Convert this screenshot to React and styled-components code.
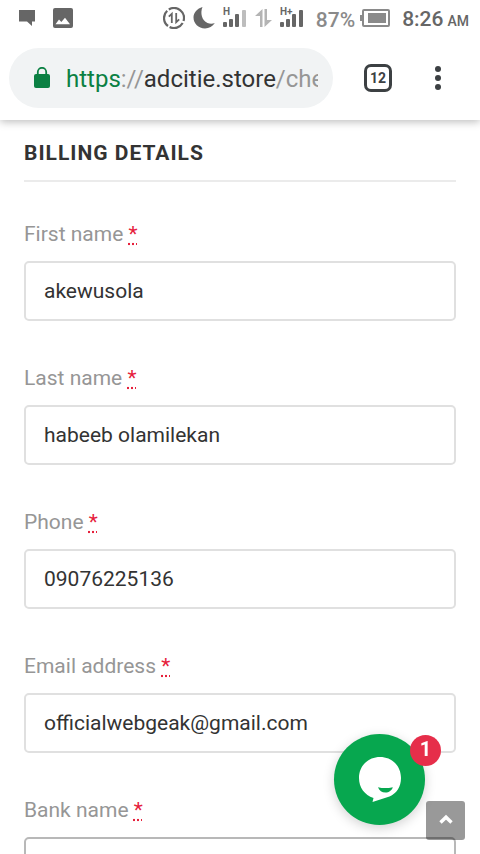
import React, { useState } from 'react';
import styled, { createGlobalStyle, ThemeProvider } from 'styled-components';

const theme = {
  text: '#333333',
  muted: '#969696',
  status: '#666666',
  secure: '#0b8043',
  danger: '#e6213c',
  badge: '#e62e4a',
  chat: '#07a74f',
};

const GlobalStyle = createGlobalStyle`
  * {
    box-sizing: border-box;
  }

  body {
    margin: 0;
    background: #ffffff;
    font-family: Roboto, "Liberation Sans", sans-serif;
  }

  button {
    border: 0;
    padding: 0;
    font-family: inherit;
    cursor: pointer;
  }

  svg {
    display: block;
    flex: none;
  }
`;

const Screen = styled.div`
  display: flex;
  flex-direction: column;
  height: 100vh;
  overflow: hidden;
`;

const Header = styled.header`
  position: relative;
  z-index: 1;
  flex: none;
  background: #ffffff;
  box-shadow: 0 2px 8px rgba(0, 0, 0, 0.26);
`;

const StatusBar = styled.div`
  display: flex;
  align-items: center;
  justify-content: space-between;
  height: 36px;
  padding: 0 11px 0 19px;
  color: ${({ theme: t }) => t.status};
`;

const StatusGroup = styled.div`
  display: flex;
  align-items: center;
  gap: ${({ $gap }) => $gap}px;
`;

const StatusText = styled.span`
  padding-top: 3px;
  font-size: 21px;
  font-weight: 500;
  line-height: 32px;
`;

const Charge = styled.div`
  display: flex;
  align-items: center;
  gap: 5px;
  padding: 0 4px;
  color: #8a8a8a;
`;

const Meridiem = styled.span`
  margin-left: 4px;
  font-size: 14px;
`;

const Toolbar = styled.div`
  display: flex;
  align-items: center;
  padding: 12px 24px 12px 9px;
`;

const AddressBar = styled.button`
  display: flex;
  flex: 1;
  align-items: center;
  gap: 16px;
  min-width: 0;
  height: 60px;
  padding: 0 15px 0 25px;
  border-radius: 30px;
  background: #f1f3f4;
  color: ${({ theme: t }) => t.secure};
`;

const Url = styled.span`
  flex: 1;
  overflow: hidden;
  padding-top: 2px;
  color: ${({ theme: t }) => t.muted};
  font-size: 24px;
  line-height: 32px;
  text-align: left;
  white-space: nowrap;
`;

const Scheme = styled.span`
  color: ${({ theme: t }) => t.secure};
`;

const Host = styled.span`
  color: ${({ theme: t }) => t.text};
`;

const TabsButton = styled.button`
  width: 28px;
  height: 28px;
  margin: 0 28px 0 31px;
  border: 3px solid #3c4043;
  border-radius: 7px;
  background: none;
  color: #3c4043;
  font-size: 14px;
  font-weight: 700;
  line-height: 22px;
`;

const MenuButton = styled.button`
  display: flex;
  align-items: center;
  justify-content: center;
  width: 36px;
  height: 36px;
  background: none;
  color: #3c4043;
`;

const Content = styled.main`
  flex: 1;
  min-height: 0;
  overflow-y: auto;
  padding: 18px 24px;
  scrollbar-width: none;
`;

const Title = styled.h3`
  margin: 0 0 34px;
  padding-bottom: 12px;
  border-bottom: 2px solid #ebebeb;
  color: ${({ theme: t }) => t.text};
  font-size: 21px;
  font-weight: 700;
  letter-spacing: 1px;
  line-height: 30px;
  text-transform: uppercase;
`;

const Field = styled.div`
  display: flex;
  flex-direction: column;
  gap: 9px;
  margin-bottom: 39px;
`;

const Label = styled.label`
  color: ${({ theme: t }) => t.muted};
  font-size: 21px;
  line-height: 36px;
`;

const Required = styled.abbr`
  color: ${({ theme: t }) => t.danger};
  text-decoration: underline dotted;
`;

const Input = styled.input`
  width: 100%;
  height: 60px;
  padding: 0 18px;
  border: 2px solid ${({ $active }) => ($active ? '#b8b8b8' : '#e0e0e0')};
  border-radius: 5px;
  outline: 0;
  background: #ffffff;
  color: ${({ theme: t }) => t.text};
  font-family: inherit;
  font-size: 21px;
`;

const ChatButton = styled.button`
  position: fixed;
  right: 55px;
  bottom: 29px;
  z-index: 2;
  display: flex;
  align-items: center;
  justify-content: center;
  width: 91px;
  height: 91px;
  border-radius: 50%;
  background: ${({ theme: t }) => t.chat};
  box-shadow: 0 3px 12px rgba(0, 0, 0, 0.18);
`;

const Badge = styled.span`
  position: absolute;
  top: 1px;
  right: -16px;
  width: 31px;
  height: 31px;
  border-radius: 50%;
  background: ${({ theme: t }) => t.badge};
  color: #ffffff;
  font-size: 20px;
  font-weight: 700;
  line-height: 28px;
`;

const TopButton = styled.button`
  position: fixed;
  right: 15px;
  bottom: 14px;
  z-index: 2;
  display: flex;
  align-items: center;
  justify-content: center;
  width: 39px;
  height: 39px;
  border-radius: 3px;
  background: rgba(0, 0, 0, 0.4);
`;

const MessageIcon = () => (
  <svg width="16" height="16" viewBox="0 0 16 16" fill="currentColor">
    <path d="M0 0h16v11.500h-3V16l-5-4.500H0z" />
  </svg>
);

const ImageIcon = () => (
  <svg width="20" height="20" viewBox="0 0 20 20">
    <rect width="20" height="20" rx="2" fill="currentColor" />
    <path d="M2.500 16.300l3.500-4.800 2.300 2.600 3.700-4.400 5 6.600z" fill="#fff" />
  </svg>
);

const DataIcon = () => (
  <svg width="22" height="22" viewBox="0 0 22 22" fill="none" stroke="currentColor">
    <path
      d="M5.800 2.500A10 10 0 0 1 20.500 14M19.700 16A10 10 0 0 1 6.600 20M5 19A10 10 0 0 1 4.200 3.700"
      strokeWidth="2.200"
    />
    <path d="M5.800 9.700L8.800 6.800V16M16.200 12.300L13.200 15.200V6" strokeWidth="1.800" />
  </svg>
);

const MoonIcon = () => (
  <svg width="22" height="22" viewBox="0 0 22 22" fill="currentColor">
    <path d="M9.500 0C7 6.200 8.800 13.300 14.500 16c2.400 1 5 .9 7.300.1C19.700 19.400 16 21.500 12 21.500 5.400 21.500.5 16.600.5 10.600.5 5.700 4.300 1.300 9.500 0z" />
  </svg>
);

const SignalIcon = ({ network, full }) => (
  <svg width="24" height="22" viewBox="0 0 24 22" fill="currentColor">
    <text x="0" y="8" fontSize="10" fontWeight="700">{ network }</text>
    <rect x="0" y="15" width="4" height="5" rx="1" />
    <rect x="6" y="12" width="4" height="8" rx="1" />
    <rect x="12" y="7" width="4" height="13" rx="1" />
    <rect x="19" y="3" width="4" height="17" rx="1" fill={ full ? 'currentColor' : '#bdbdbd' } />
  </svg>
);

const TrafficIcon = () => (
  <svg width="17" height="18" viewBox="0 0 17 18" fill="#b4b4b4">
    <path d="M7.500 0v18H5V7H0zM9.500 0H12v11h5L9.500 18z" />
  </svg>
);

const BatteryIcon = () => (
  <svg width="30" height="18" viewBox="0 0 30 18" fill="currentColor">
    <rect x="0" y="6" width="3" height="6" />
    <rect x="3" y="1" width="26" height="16" rx="1" fill="none" stroke="currentColor" strokeWidth="2" />
    <rect x="8" y="4" width="18" height="10" />
  </svg>
);

const LockIcon = () => (
  <svg width="16" height="22" viewBox="0 0 16 22">
    <rect y="7" width="16" height="14" rx="2" fill="currentColor" />
    <path d="M3.800 8V5a4.200 4.200 0 0 1 8.400 0v3" fill="none" stroke="currentColor" strokeWidth="1.800" />
  </svg>
);

const MenuIcon = () => (
  <svg width="6" height="24" viewBox="0 0 6 24" fill="currentColor">
    <circle cx="3" cy="3" r="3" />
    <circle cx="3" cy="12" r="3" />
    <circle cx="3" cy="21" r="3" />
  </svg>
);

const ChatIcon = () => (
  <svg width="44" height="48" viewBox="0 0 44 48">
    <path
      d="M22 1C34.200 1 43 10 43 22c0 9-4.500 15.500-11.500 18.500L14.500 46l1-4C6.500 39 1 31.500 1 22 1 10 10 1 22 1z"
      fill="#fff"
    />
    <path d="M20 31.200q7 1.800 14.800 0c-1 3.200-3.800 5.300-7.300 5.300s-6.300-2-7.500-5.300z" fill="#07a74f" />
  </svg>
);

const ChevronIcon = () => (
  <svg width="14" height="14" viewBox="0 0 14 14">
    <path d="M1.500 8.500L7 3.200 12.500 8.500" fill="none" stroke="#fff" strokeWidth="3.400" />
  </svg>
);

const FIELDS = [
  { id: 'first_name', label: 'First name', type: 'text', value: 'akewusola' },
  { id: 'last_name', label: 'Last name', type: 'text', value: 'habeeb olamilekan' },
  { id: 'phone', label: 'Phone', type: 'tel', value: '09076225136' },
  { id: 'email', label: 'Email address', type: 'email', value: 'officialwebgeak@gmail.com' },
  { id: 'bank_name', label: 'Bank name', type: 'text', value: '', active: true },
];

const BillingField = ({ id, label, type, value, active }) => {
  const [current, setCurrent] = useState(value);

  return (
    <Field>
      <Label htmlFor={ id }>
        { `${label} ` }
        <Required>*</Required>
      </Label>
      <Input
        id={ id }
        type={ type }
        value={ current }
        $active={ active }
        onChange={ ({ target }) => setCurrent(target.value) }
      />
    </Field>
  );
};

const App = () => (
  <ThemeProvider theme={ theme }>
    <GlobalStyle />
    <Screen>
      <Header>
        <StatusBar>
          <StatusGroup $gap={ 18 }>
            <MessageIcon />
            <ImageIcon />
          </StatusGroup>
          <StatusGroup $gap={ 8 }>
            <DataIcon />
            <MoonIcon />
            <SignalIcon network="H" />
            <TrafficIcon />
            <SignalIcon network="H+" full />
            <Charge>
              <StatusText>87%</StatusText>
              <BatteryIcon />
            </Charge>
            <StatusText as="time">
              8:26
              <Meridiem>AM</Meridiem>
            </StatusText>
          </StatusGroup>
        </StatusBar>
        <Toolbar>
          <AddressBar type="button">
            <LockIcon />
            <Url>
              <Scheme>https</Scheme>
              ://
              <Host>adcitie.store</Host>
              /che
            </Url>
          </AddressBar>
          <TabsButton type="button">12</TabsButton>
          <MenuButton type="button" aria-label="Menu">
            <MenuIcon />
          </MenuButton>
        </Toolbar>
      </Header>
      <Content>
        <form>
          <Title>Billing details</Title>
          { FIELDS.map((field) => <BillingField key={ field.id } { ...field } />) }
        </form>
      </Content>
      <ChatButton type="button" aria-label="Chat">
        <ChatIcon />
        <Badge>1</Badge>
      </ChatButton>
      <TopButton type="button" aria-label="Back to top">
        <ChevronIcon />
      </TopButton>
    </Screen>
  </ThemeProvider>
);

export default App;
